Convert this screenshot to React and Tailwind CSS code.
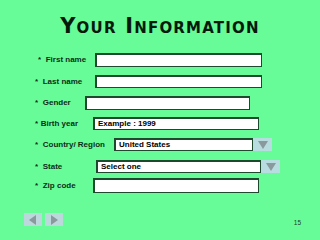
import React from 'react';

const fields = [
    { label: 'First name', star: 38, gap: 4.6, left: 95, width: 167, h: 14, mt: 0 },
    { label: 'Last name', star: 35, gap: 4.6, left: 95, width: 167, h: 13, mt: 8 },
    { label: 'Gender', star: 35, gap: 4.6, left: 85, width: 165, h: 14, mt: 8 },
    { label: 'Birth year', star: 35, gap: 2.6, left: 93, width: 166, h: 13, mt: 7, value: 'Example : 1999' },
    { label: 'Country/ Region', star: 35, gap: 4.6, left: 114, width: 139, h: 13, mt: 8, value: 'United States', select: true },
    { label: 'State', star: 35, gap: 4.6, left: 96, width: 165, h: 13, mt: 9, value: 'Select one', select: true },
    { label: 'Zip code', star: 35, gap: 4.6, left: 93, width: 166, h: 15, mt: 5 },
];

const Triangle = ({ dir }) => {
    const pts = dir === 'down' ? '2,2 12,2 7,10' : dir === 'left' ? '10,1 10,11 3,6' : '4,1 4,11 11,6';
    return (
        <svg width="14" height="12" viewBox="0 0 14 12">
            <polygon points={pts} fill="#8a9a9c" />
        </svg>
    );
};

const App = () => {
    return (
        <div className="w-[320px] h-[240px] bg-[#68fc98] flex flex-col overflow-hidden font-['Liberation_Sans',Arial,sans-serif] text-[#0c2e18]">
            <div className="h-[53px] pt-[12px] text-center">
                <h1 className="text-[21px] leading-[28px] font-bold [font-variant:small-caps] tracking-[1.2px] text-[#061a0c] font-['DejaVu_Sans',sans-serif]">
                    Your Information
                </h1>
            </div>

            {fields.map((f, i) => (
                <div key={i} className="flex items-center" style={{ marginTop: f.mt, height: f.h }}>
                    <div className="shrink-0 flex items-center text-[8px] font-bold" style={{ width: f.left, paddingLeft: f.star }}>
                        <span>*</span>
                        <span style={{ marginLeft: f.gap }}>{f.label}</span>
                    </div>
                    <div className="h-full bg-white border border-[#1d4a2c] shadow-[inset_1px_1px_0_#1d4a2c] flex items-center pl-[4px] text-[8px] font-bold text-black" style={{ width: f.width }}>
                        {f.value}
                    </div>
                    {f.select && (
                        <div className="w-[19px] h-full bg-[#b8dde0] flex items-center justify-center">
                            <Triangle dir="down" />
                        </div>
                    )}
                </div>
            ))}

            <div className="mt-[20px] flex items-start pl-[24px] pr-[19px]">
                <div className="w-[18px] h-[13px] bg-[#bcd8dc] flex items-center justify-center">
                    <Triangle dir="left" />
                </div>
                <div className="ml-[3px] w-[18px] h-[13px] bg-[#bcd8dc] flex items-center justify-center">
                    <Triangle dir="right" />
                </div>
                <span className="ml-auto mt-[6px] text-[6.5px] leading-[8px] text-[#1d3d28]">15</span>
            </div>
        </div>
    );
};

export default App;
